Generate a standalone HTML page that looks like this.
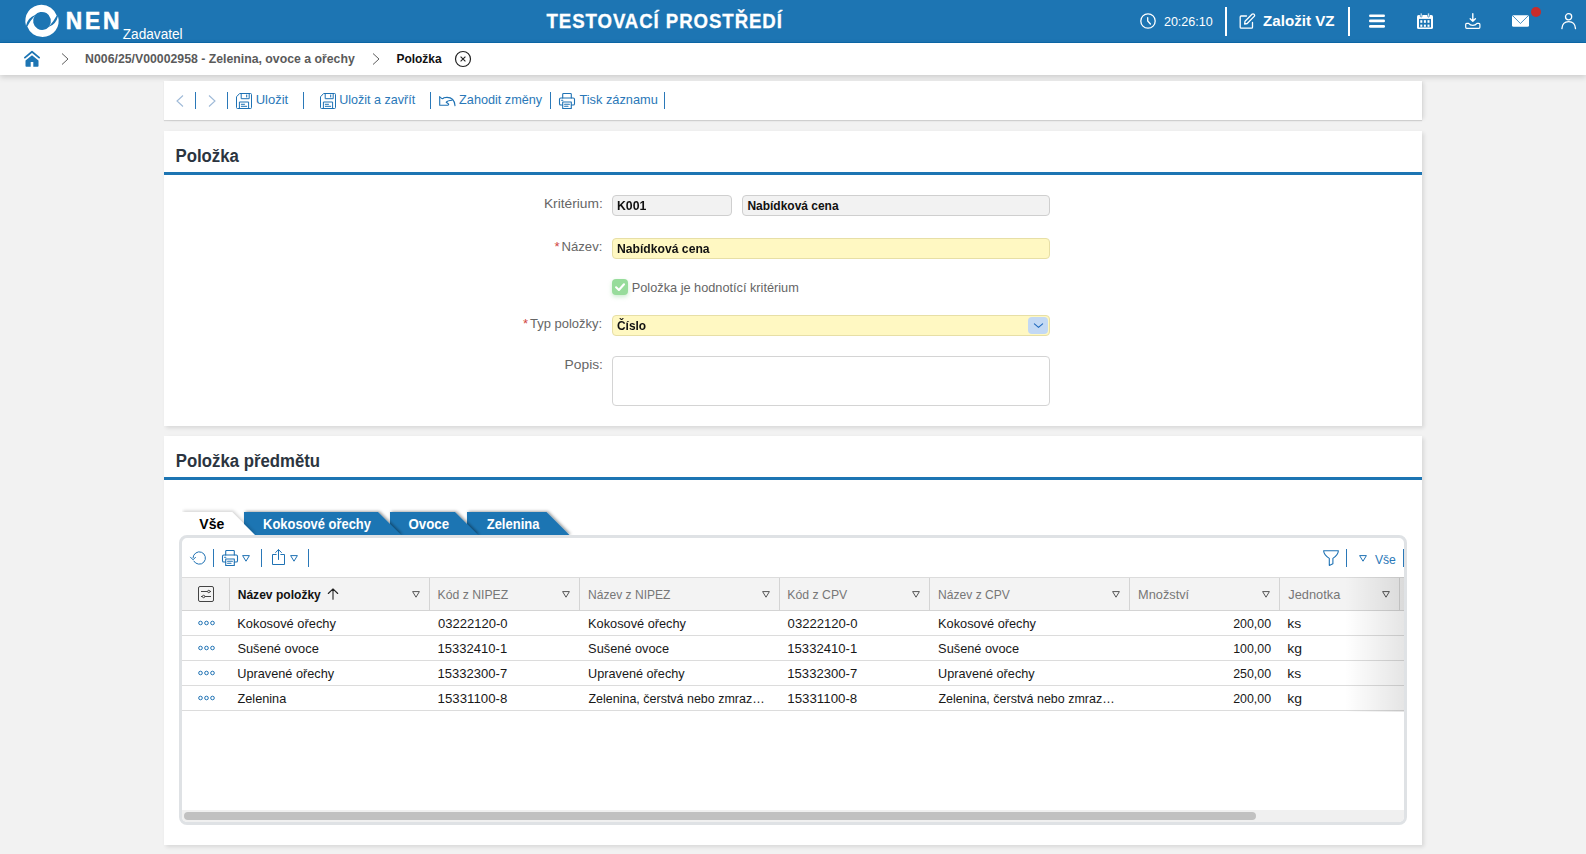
<!DOCTYPE html>
<html lang="cs">
<head>
<meta charset="utf-8">
<title>NEN - Položka</title>
<style>
*{box-sizing:border-box;margin:0;padding:0}
html,body{width:1586px;height:854px;overflow:hidden}
body{background:#f2f2f2;font-family:"Liberation Sans",sans-serif;font-size:13px;color:#222;position:relative}
.abs{position:absolute}
svg{display:block;overflow:visible}
/* header */
#hdr{position:absolute;left:0;top:0;width:1586px;height:43px;background:#1d75b3;border-bottom:1px solid #0c69aa;color:#fff}
#hdr .t{position:absolute;white-space:nowrap;color:#fff}
#hdr .vsep{position:absolute;top:7px;width:2px;height:29px;background:#fff}
/* breadcrumb */
#bc{position:absolute;left:0;top:43px;width:1586px;height:32px;background:#fff;box-shadow:0 2px 6px rgba(0,0,0,.17)}
#bc .t{position:absolute;white-space:nowrap;font-weight:bold;font-size:13px;line-height:16px;top:8px}
/* panels */
.panel{position:absolute;left:164px;width:1258px;background:#fff;box-shadow:2px 2px 4px rgba(0,0,0,.11)}
.ptitle{position:absolute;left:12px;white-space:nowrap;font-weight:bold;font-size:18px;line-height:22px;color:#2b3440}
.pline{position:absolute;left:0;width:1258px;height:3px;background:#1d75b3}
/* toolbar */
.tb{position:absolute;white-space:nowrap;color:#2a78b8;font-size:13px;line-height:16px}
.sep{position:absolute;width:1px;background:#2a78b8}
/* form */
.lbl{position:absolute;white-space:nowrap;color:#666;font-size:13px;line-height:16px;text-align:right}
.lbl b{color:#d0453f;font-weight:normal;margin-right:2px}
.inp{position:absolute;height:21px;border:1px solid #cfcfcf;border-radius:4px;background:#f2f2f2;font-weight:bold;font-size:13px;line-height:19px;padding-left:4px;color:#111;white-space:nowrap}
.inp span{display:inline-block}
.inp.req{background:#fff8c2;border-color:#e7dfa6}
/* grid */
#grid{position:absolute;left:15px;top:99px;width:1228px;height:290px;border:3px solid #dfe2e5;border-radius:8px;background:#fff;overflow:hidden}
.gh{position:absolute;top:39px;height:34px;border-top:1px solid #dcdcdc;border-bottom:1px solid #d4d4d4;background:#f3f3f3;left:0;width:1221px}
.gh .c{position:absolute;top:0;height:32px;border-right:1px solid #d4d4d4;color:#777;font-size:13px;line-height:16px;white-space:nowrap}
.gh .c span{position:absolute;left:8px;top:8px}
.gh .c svg{position:absolute;right:9px;top:13px}
.row{position:absolute;left:0;width:1221px;height:25px;border-bottom:1px solid #dcdcdc;font-size:13px;color:#181818}
.row span{position:absolute;top:4px;line-height:16px;white-space:nowrap}
.row .num{text-align:right}
.gh::before{content:"";position:absolute;left:-1px;top:-1px;width:1px;height:32px;background:#f3f3f3;border-top:1px solid #dcdcdc;border-bottom:1px solid #d4d4d4}
.row::before{content:"";position:absolute;left:-1px;bottom:-1px;width:1px;height:1px;background:#dcdcdc}
.tab{position:absolute;top:0;height:23px;color:#fff;font-weight:bold;font-size:15px;line-height:18px;white-space:nowrap}
/*FIT*/
#nen{transform-origin:left top;transform:translate(-0.30px,0px) scaleX(0.9647)}
#zad{transform-origin:left top;transform:translate(-0.20px,0px) scaleX(0.9733)}
#ttl{transform-origin:left top;transform:translate(-0.50px,0px) scaleX(0.9311)}
#clk{transform-origin:left top;transform:translate(-0.10px,1px) scaleX(0.9658)}
#zvz{transform-origin:left top;transform:translate(0.10px,1px) scaleX(1.0087)}
#bc1{transform-origin:left top;transform:translate(0.10px,0px) scaleX(0.9448)}
#bc2{transform-origin:left top;transform:translate(0.40px,0px) scaleX(0.9199)}
#pt1{transform-origin:left top;transform:translate(-0.50px,0px) scaleX(0.9315)}
#pt2{transform-origin:left top;transform:translate(-0.30px,0px) scaleX(0.9315)}
#t1{transform-origin:left top;transform:translate(-0.30px,1px) scaleX(1.0010)}
#t2{transform-origin:left top;transform:translate(-0.80px,1px) scaleX(0.9641)}
#t3{transform-origin:left top;transform:translate(0.10px,1px) scaleX(0.9745)}
#t4{transform-origin:left top;transform:translate(0.40px,1px) scaleX(0.9836)}
#l1{transform-origin:right top;transform:translate(1.20px,1px) scaleX(1.0588)}
#l2{transform-origin:right top;transform:translate(0.80px,1px) scaleX(1.0075)}
#l3{transform-origin:left top;transform:translate(-0.20px,1px) scaleX(0.9794)}
#l4{transform-origin:right top;transform:translate(-0.20px,1px) scaleX(0.9990)}
#l5{transform-origin:right top;transform:translate(0.80px,1px) scaleX(1.0602)}
#i1t{transform-origin:left top;transform:translate(0.00px,0px) scaleX(0.9416)}
#i2t{transform-origin:left top;transform:translate(0.40px,0px) scaleX(0.9212)}
#i3t{transform-origin:left top;transform:translate(0.00px,0px) scaleX(0.9353)}
#i4t{transform-origin:left top;transform:translate(0.00px,0px) scaleX(0.9161)}
#tb1{transform-origin:left top;transform:translate(0.30px,0px) scaleX(0.9358)}
#tb2{transform-origin:left top;transform:translate(0.10px,0px) scaleX(0.8622)}
#tb3{transform-origin:left top;transform:translate(0.50px,0px) scaleX(0.8849)}
#tb4{transform-origin:left top;transform:translate(0.70px,0px) scaleX(0.8663)}
#gv{transform-origin:left top;transform:translate(-0.10px,1px) scaleX(0.9363)}
#h1{transform-origin:left top;transform:translate(-0.30px,1px) scaleX(0.9279)}
#h2{transform-origin:left top;transform:translate(-0.40px,1px) scaleX(0.9394)}
#h3{transform-origin:left top;transform:translate(0.10px,1px) scaleX(0.9263)}
#h4{transform-origin:left top;transform:translate(-0.70px,1px) scaleX(0.9430)}
#h5{transform-origin:left top;transform:translate(0.10px,1px) scaleX(0.9287)}
#h6{transform-origin:left top;transform:translate(0.10px,1px) scaleX(0.9811)}
#h7{transform-origin:left top;transform:translate(0.30px,1px) scaleX(0.9852)}
#r0c0{transform-origin:left top;transform:translate(-0.80px,1px) scaleX(0.9901)}
#r1c0{transform-origin:left top;transform:translate(-0.60px,1px) scaleX(0.9883)}
#r2c0{transform-origin:left top;transform:translate(-0.80px,1px) scaleX(0.9789)}
#r3c0{transform-origin:left top;transform:translate(-0.50px,1px) scaleX(0.9776)}
#r0c1{transform-origin:left top;transform:translate(-0.10px,1px) scaleX(1.0031)}
#r1c1{transform-origin:left top;transform:translate(-0.40px,1px) scaleX(1.0031)}
#r2c1{transform-origin:left top;transform:translate(-0.40px,1px) scaleX(1.0031)}
#r3c1{transform-origin:left top;transform:translate(-0.40px,1px) scaleX(1.0178)}
#r0c2{transform-origin:left top;transform:translate(0.10px,1px) scaleX(0.9811)}
#r1c2{transform-origin:left top;transform:translate(0.10px,1px) scaleX(0.9833)}
#r2c2{transform-origin:left top;transform:translate(0.10px,1px) scaleX(0.9748)}
#r3c2{transform-origin:left top;transform:translate(0.50px,1px) scaleX(0.9599)}
#r0c3{transform-origin:left top;transform:translate(-0.40px,1px) scaleX(1.0074)}
#r1c3{transform-origin:left top;transform:translate(-0.70px,1px) scaleX(1.0074)}
#r2c3{transform-origin:left top;transform:translate(-0.70px,1px) scaleX(1.0074)}
#r3c3{transform-origin:left top;transform:translate(-0.70px,1px) scaleX(1.0220)}
#r0c4{transform-origin:left top;transform:translate(0.10px,1px) scaleX(0.9811)}
#r1c4{transform-origin:left top;transform:translate(0.10px,1px) scaleX(0.9833)}
#r2c4{transform-origin:left top;transform:translate(0.10px,1px) scaleX(0.9748)}
#r3c4{transform-origin:left top;transform:translate(0.50px,1px) scaleX(0.9599)}
#r0c5{transform-origin:right top;transform:translate(0.30px,1px) scaleX(0.9536)}
#r1c5{transform-origin:right top;transform:translate(0.30px,1px) scaleX(0.9518)}
#r2c5{transform-origin:right top;transform:translate(0.30px,1px) scaleX(0.9536)}
#r3c5{transform-origin:right top;transform:translate(0.30px,1px) scaleX(0.9536)}
#r0c6{transform-origin:left top;transform:translate(-0.70px,1px) scaleX(1.0733)}
#r1c6{transform-origin:left top;transform:translate(-0.70px,1px) scaleX(1.0733)}
#r2c6{transform-origin:left top;transform:translate(-0.70px,1px) scaleX(1.0733)}
#r3c6{transform-origin:left top;transform:translate(-0.70px,1px) scaleX(1.0733)}
/*ENDFIT*/
</style>
</head>
<body>

<!-- ================= HEADER ================= -->
<div id="hdr">
  <svg class="abs" style="left:25px;top:4px" width="34" height="34" viewBox="25 4 34 34" fill="#fff">
    <path d="M26.01 25.74A16.2 16.2 0 0 1 41.50 4.80A16.2 16.2 0 0 1 56.72 15.46Q53.4 21.8 49.18 26.19A9 9 0 0 0 46.40 13.11A9 9 0 0 0 35.01 15.11Q27.9 17.75 26.01 25.74Z"/>
    <path transform="rotate(180 42 20.950)" d="M26.01 25.74A16.2 16.2 0 0 1 41.50 4.80A16.2 16.2 0 0 1 56.72 15.46Q53.4 21.8 49.18 26.19A9 9 0 0 0 46.40 13.11A9 9 0 0 0 35.01 15.11Q27.9 17.75 26.01 25.74Z"/>
  </svg>
  <div class="t" id="nen" style="left:66px;top:7px;font-size:23.500px;line-height:28px;font-weight:bold;letter-spacing:3px;-webkit-text-stroke:.6px #fff">NEN</div>
  <div class="t" id="zad" style="left:123px;top:26px;font-size:14px;line-height:16px">Zadavatel</div>
  <div class="t" id="ttl" style="left:547px;top:9px;font-size:20px;line-height:24px;font-weight:bold;letter-spacing:1px;-webkit-text-stroke:.3px #fff">TESTOVACÍ PROSTŘEDÍ</div>

  <svg class="abs" style="left:1139.500px;top:13px" width="16" height="16" viewBox="0 0 16 16" fill="none" stroke="#fff" stroke-width="1.300" stroke-linecap="round"><circle cx="8" cy="8" r="7.200"/><path d="M7.700 4.600V8l2.700 3"/></svg>
  <div class="t" id="clk" style="left:1164px;top:13px;font-size:13px;line-height:16px">20:26:10</div>
  <div class="vsep" style="left:1225px"></div>
  <svg class="abs" style="left:1239px;top:13px" width="17" height="16" viewBox="0 0 17 16" fill="none" stroke="#fff" stroke-width="1.3" stroke-linejoin="round" stroke-linecap="round"><path d="M7.5 3H2.2a1 1 0 0 0-1 1v10.2a1 1 0 0 0 1 1h10.3a1 1 0 0 0 1-1V9.5"/><path d="M6 8.3 13 1.2a1.4 1.4 0 0 1 2 0l.2.2a1.4 1.4 0 0 1 0 2L8.2 10.5 5.6 11z"/></svg>
  <div class="t" id="zvz" style="left:1263px;top:11px;font-size:15px;line-height:18px;font-weight:bold">Založit VZ</div>
  <div class="vsep" style="left:1348px"></div>

  <svg class="abs" style="left:1369px;top:13px" width="16" height="16" viewBox="0 0 16 16" fill="#fff"><rect x="0" y="1.400" width="16" height="2.700" rx="1.300"/><rect x="0" y="6.600" width="16" height="2.700" rx="1.300"/><rect x="0" y="12" width="16" height="2.700" rx="1.300"/></svg>
  <svg class="abs" style="left:1417px;top:13px" width="16" height="16" viewBox="0 0 16 16"><rect x="0" y="2" width="16" height="14" rx="1.600" fill="#fff"/><rect x="3.300" y="0" width="1.700" height="4" rx=".8" fill="#fff" stroke="#1d75b3" stroke-width=".7"/><rect x="10.700" y="0" width="1.700" height="4" rx=".8" fill="#fff" stroke="#1d75b3" stroke-width=".7"/><rect x="2" y="5.900" width="12" height="8.500" fill="#1d75b3"/><g fill="#fff"><rect x="3.300" y="7.200" width="2" height="2.600"/><rect x="6.900" y="7.200" width="2" height="2.600"/><rect x="10.500" y="7.200" width="2" height="2.600"/><rect x="3.300" y="11.600" width="2" height="2.200"/><rect x="6.900" y="11.600" width="2" height="2.200"/><rect x="10.500" y="11.600" width="2" height="2.200"/></g></svg>
  <svg class="abs" style="left:1465px;top:13px" width="16" height="16" viewBox="0 0 16 16" fill="none" stroke="#fff" stroke-width="1.400" stroke-linecap="round" stroke-linejoin="round"><path d="M7.800.8v7.400M5.200 5.700 7.800 8.300l2.600-2.600"/><path d="M.7 11.400v2.900a1 1 0 0 0 1 1h12.200a1 1 0 0 0 1-1V11.400a1 1 0 0 0-1-1H12c-1 1.300-2.400 2-4.200 2s-3.200-.7-4.200-2H1.700a1 1 0 0 0-1 1z" stroke-width="1.200"/></svg>
  <svg class="abs" style="left:1512px;top:15px" width="17" height="12" viewBox="0 0 17 12"><rect x="0" y=".2" width="17" height="11.500" rx="1.500" fill="#fff"/><path d="M.8.800 8.400 8.500 16.200.800" fill="none" stroke="#1d75b3" stroke-width=".8"/></svg>
  <div class="abs" style="left:1531px;top:7px;width:10px;height:10px;border-radius:50%;background:#c82c2b"></div>
  <svg class="abs" style="left:1561px;top:13px" width="16" height="16" viewBox="0 0 16 16" fill="none" stroke="#fff" stroke-width="1.300" stroke-linecap="round"><circle cx="7.600" cy="3.800" r="3.100"/><path d="M.9 15.600C1.200 11.200 4 8.600 7.700 8.600s6.500 2.600 6.800 7"/></svg>
</div>

<!-- ================= BREADCRUMB ================= -->
<div id="bc">
  <svg class="abs" style="left:24px;top:8px" width="16" height="16" viewBox="0 0 16 16"><path d="M.9 6.600 8 .8l7.100 5.800" fill="none" stroke="#1d75b3" stroke-width="1.800" stroke-linecap="round" stroke-linejoin="round"/><path d="M8 4.200 1.500 9.600V15a.8.800 0 0 0 .8.800h4.400v-4.800h2.600v4.800h4.400a.8.800 0 0 0 .8-.8V9.600z" fill="#1d75b3"/></svg>
  <svg class="abs" style="left:61px;top:10px" width="8" height="12" viewBox="0 0 8 12" fill="none" stroke="#5e5e5e" stroke-width="1"><path d="M1 .5 7 6 1 11.500"/></svg>
  <div class="t" id="bc1" style="left:85px;color:#5a5a5a">N006/25/V00002958 - Zelenina, ovoce a ořechy</div>
  <svg class="abs" style="left:372px;top:10px" width="8" height="12" viewBox="0 0 8 12" fill="none" stroke="#5e5e5e" stroke-width="1"><path d="M1 .5 7 6 1 11.500"/></svg>
  <div class="t" id="bc2" style="left:396px;color:#111">Položka</div>
  <svg class="abs" style="left:454px;top:7px" width="18" height="18" viewBox="0 0 18 18" fill="none" stroke="#222" stroke-width="1.200"><circle cx="9" cy="9" r="7.500"/><path d="M6.600 6.600l4.800 4.800M11.400 6.600l-4.800 4.800" stroke-width="1.100"/></svg>
</div>

<!-- ================= TOOLBAR ================= -->
<div class="panel" id="tbp" style="top:81px;height:39px;box-shadow:0 1px 1px rgba(0,0,0,.12),3px 0 4px -1px rgba(0,0,0,.1)">
  <svg class="abs" style="left:12px;top:14px" width="8" height="12" viewBox="0 0 8 12" fill="none" stroke="#9fbad8" stroke-width="1.1"><path d="M7 .5 1 6l6 5.500"/></svg>
  <div class="sep" style="left:31px;top:11px;height:17px"></div>
  <svg class="abs" style="left:44px;top:14px" width="8" height="12" viewBox="0 0 8 12" fill="none" stroke="#9fbad8" stroke-width="1.1"><path d="M1 .5 7 6l-6 5.500"/></svg>
  <div class="sep" style="left:63px;top:11px;height:17px"></div>
  <svg class="abs" style="left:72px;top:12px" width="16" height="16" viewBox="0 0 16 16" fill="none" stroke="#1f72b4" stroke-width="1" stroke-linejoin="round"><path d="M3.600.5H14.500a1 1 0 0 1 1 1V14.500a1 1 0 0 1-1 1H1.500a1 1 0 0 1-1-1V3.800z"/><path d="M5.200.5v5.200h8V.5"/><path d="M10.700 2v2" stroke-linecap="round"/><path d="M3.400 15.500V9h9.200v6.500"/><path d="M5.300 11.300h3.200M5.300 13.300h5.400" stroke-linecap="round"/></svg>
  <div class="tb" id="t1" style="left:92px;top:10px">Uložit</div>
  <div class="sep" style="left:139px;top:11px;height:17px"></div>
  <svg class="abs" style="left:156px;top:12px" width="16" height="16" viewBox="0 0 16 16" fill="none" stroke="#1f72b4" stroke-width="1" stroke-linejoin="round"><path d="M3.600.5H14.500a1 1 0 0 1 1 1V14.500a1 1 0 0 1-1 1H1.500a1 1 0 0 1-1-1V3.800z"/><path d="M5.200.5v5.200h8V.5"/><path d="M10.700 2v2" stroke-linecap="round"/><path d="M3.400 15.500V9h9.200v6.500"/><path d="M5.300 11.300h3.200M5.300 13.300h5.400" stroke-linecap="round"/></svg>
  <div class="tb" id="t2" style="left:176px;top:10px">Uložit a zavřít</div>
  <div class="sep" style="left:266px;top:11px;height:17px"></div>
  <svg class="abs" style="left:275px;top:14px" width="17" height="12" viewBox="0 0 17 12" fill="none" stroke="#1f72b4" stroke-width="1.100" stroke-linejoin="round" stroke-linecap="round"><path d="M.7 1.900V10.200H8.800Q10.300 9.500 9.300 8.700L7.200 7.300Q8.600 5.300 13 5.200"/><path d="M16 10.600C15.600 5.500 12.500 2.400 8 2.400 6.500 2.400 5.300 2.500 4.800 2.800 3.900 3.900 3 3.700 2.300 3.100L.7 1.900"/></svg>
  <div class="tb" id="t3" style="left:295px;top:10px">Zahodit změny</div>
  <div class="sep" style="left:386px;top:11px;height:17px"></div>
  <svg class="abs" style="left:395px;top:12px" width="16" height="16" viewBox="0 0 16 16" fill="none" stroke="#1f72b4" stroke-width="1.100" stroke-linejoin="round" stroke-linecap="round"><path d="M3.700 5V1.300a.8.800 0 0 1 .8-.8h7a.8.800 0 0 1 .8.800V5"/><path d="M3.600 12H1.800A1.300 1.300 0 0 1 .5 10.700V6.300A1.300 1.300 0 0 1 1.800 5H14.200a1.300 1.300 0 0 1 1.300 1.300v4.400A1.300 1.300 0 0 1 14.200 12H12.400"/><path d="M3.700 9h8.600v6.500H3.700z"/><path d="M5.600 11.300h4.800M5.600 13.300h3.400M2.600 7.200h1.200"/></svg>
  <div class="tb" id="t4" style="left:415px;top:10px">Tisk záznamu</div>
  <div class="sep" style="left:500px;top:11px;height:17px"></div>
</div>

<!-- ================= PANEL 1 ================= -->
<div class="panel" id="p1" style="top:131px;height:295px">
  <div class="ptitle" id="pt1" style="top:14px">Položka</div>
  <div class="pline" style="top:41px"></div>
  <div class="lbl" id="l1" style="right:820px;top:64px">Kritérium:</div>
  <div class="inp" id="i1" style="left:448px;top:64px;width:120px"><span id="i1t">K001</span></div>
  <div class="inp" id="i2" style="left:578px;top:64px;width:308px"><span id="i2t">Nabídková cena</span></div>
  <div class="lbl" id="l2" style="right:820px;top:107px"><b>*</b>Název:</div>
  <div class="inp req" id="i3" style="left:448px;top:107px;width:438px"><span id="i3t">Nabídková cena</span></div>
  <div class="abs" id="cb" style="left:448px;top:148px;width:16px;height:16px;border-radius:4px;background:#97dc9b;box-shadow:0 2px 4px rgba(110,200,120,.35)"><svg class="abs" style="left:3px;top:4px" width="10" height="8" viewBox="0 0 10 8" fill="none" stroke="#fff" stroke-width="2.100" stroke-linecap="round" stroke-linejoin="round"><path d="M1.100 4.300 3.900 7 9 1.300"/></svg></div>
  <div class="lbl" id="l3" style="left:468px;top:148px;text-align:left">Položka je hodnotící kritérium</div>
  <div class="lbl" id="l4" style="right:820px;top:184px"><b>*</b>Typ položky:</div>
  <div class="inp req" id="i4" style="left:448px;top:184px;width:438px"><span id="i4t">Číslo</span>
    <div class="abs" style="right:1px;top:1px;width:20px;height:17px;border-radius:4px;background:#c3d9f4"><svg class="abs" style="left:6px;top:6px" width="9" height="5" viewBox="0 0 9 5" fill="none" stroke="#1f69bd" stroke-width="1.100" stroke-linecap="round" stroke-linejoin="round"><path d="M.4.900 4.500 4.400 8.600.900"/></svg></div>
  </div>
  <div class="lbl" id="l5" style="right:820px;top:225px">Popis:</div>
  <div class="inp" id="i5" style="left:448px;top:225px;width:438px;height:50px;background:#fff;border-color:#d4d4d4"></div>
</div>

<!-- ================= PANEL 2 ================= -->
<div class="panel" id="p2" style="top:436px;height:409px">
  <div class="ptitle" id="pt2" style="top:14px">Položka předmětu</div>
  <div class="pline" style="top:41px"></div>
  <svg class="abs" style="left:0;top:70px" width="460" height="32" viewBox="164 506 460 32">
    <defs><filter id="ts" x="-10%" y="-40%" width="120%" height="180%"><feDropShadow dx="1.500" dy="-.5" stdDeviation="1.600" flood-color="#000" flood-opacity=".42"/></filter>
    <filter id="ts2" x="-10%" y="-40%" width="120%" height="180%"><feDropShadow dx="1.200" dy="-1.500" stdDeviation="1.500" flood-color="#000" flood-opacity=".16"/></filter></defs>
    <polygon points="467,512 546.500,512 569.500,535 467,535" fill="#1d75b3" filter="url(#ts)"/>
    <polygon points="390,512 455,512 478,535 390,535" fill="#1d75b3" filter="url(#ts)"/>
    <polygon points="244,512 378,512 401,535 244,535" fill="#1d75b3" filter="url(#ts)"/>
    <polygon points="182,512 232,512 255,535 182,535" fill="#fff" filter="url(#ts2)"/>
    <rect x="170" y="535" width="440" height="4" fill="#fff"/><rect x="170" y="506" width="12" height="30" fill="#fff"/>
  </svg>
  <div class="tab" id="tb1" style="left:35px;top:79px;color:#000">Vše</div>
  <div class="tab" id="tb2" style="left:99px;top:79px">Kokosové ořechy</div>
  <div class="tab" id="tb3" style="left:244px;top:79px">Ovoce</div>
  <div class="tab" id="tb4" style="left:322px;top:79px">Zelenina</div>
  <div id="grid"><div class="abs" style="left:1px;top:0;width:1221px;height:284px">
  <svg class="abs" style="left:7px;top:13px" width="16" height="15" viewBox="0 0 16 15" fill="none" stroke="#1f72b4" stroke-width="1" stroke-linecap="round" stroke-linejoin="round"><path d="M3.800 10.100A6.200 6.200 0 1 0 3 6.800"/><path d="M.5 6.200 3 8.800 5.500 6.300"/></svg>
  <div class="sep" style="left:30px;top:11px;height:18px"></div>
  <svg class="abs" style="left:39px;top:12px" width="16" height="16" viewBox="0 0 16 16" fill="none" stroke="#1f72b4" stroke-width="1.100" stroke-linejoin="round" stroke-linecap="round"><path d="M3.700 5V1.300a.8.800 0 0 1 .8-.8h7a.8.800 0 0 1 .8.800V5"/><path d="M3.600 12H1.800A1.300 1.300 0 0 1 .5 10.700V6.300A1.300 1.300 0 0 1 1.800 5H14.200a1.300 1.300 0 0 1 1.300 1.300v4.400A1.300 1.300 0 0 1 14.200 12H12.400"/><path d="M3.700 9h8.600v6.500H3.700z"/><path d="M5.600 11.300h4.800M5.600 13.300h3.400M2.600 7.200h1.200"/></svg>
  <svg class="abs" style="left:59px;top:17px" width="8" height="7" viewBox="0 0 8 7" fill="none" stroke="#1f72b4" stroke-width="1" stroke-linejoin="round"><path d="M.6.600h6.800L4 6.200z"/></svg>
  <div class="sep" style="left:78px;top:11px;height:18px"></div>
  <svg class="abs" style="left:89px;top:11px" width="13" height="16" viewBox="0 0 13 16" fill="none" stroke="#1f72b4" stroke-width="1" stroke-linejoin="round" stroke-linecap="round"><path d="M4.200 5.500H.5v10h12v-10H8.800"/><path d="M6.500 10.500V.8M3.600 3.500 6.500.600l2.900 2.900"/></svg>
  <svg class="abs" style="left:107px;top:17px" width="8" height="7" viewBox="0 0 8 7" fill="none" stroke="#1f72b4" stroke-width="1" stroke-linejoin="round"><path d="M.6.600h6.800L4 6.200z"/></svg>
  <div class="sep" style="left:125px;top:11px;height:18px"></div>

  <svg class="abs" style="left:1140px;top:12px" width="16" height="16" viewBox="0 0 16 16" fill="none" stroke="#1f72b4" stroke-width="1.100" stroke-linejoin="round"><path d="M.6.800h14.800c-.3 3.600-2.600 5.800-5.500 7.600v5.400L6.300 15.400V8.400C3.300 6.600.9 4.400.6.800z"/></svg>
  <div class="sep" style="left:1163px;top:11px;height:18px"></div>
  <svg class="abs" style="left:1176px;top:17px" width="8" height="7" viewBox="0 0 8 7" fill="none" stroke="#1f72b4" stroke-width="1" stroke-linejoin="round"><path d="M.6.600h6.800L4 6.200z"/></svg>
  <div class="tb" id="gv" style="left:1192px;top:13px">Vše</div>
  <div class="sep" style="left:1220px;top:11px;height:18px"></div>

  <div class="gh">
    <div class="c" style="left:0;width:47px"><svg style="left:15px;top:8px;right:auto" width="16" height="16" viewBox="0 0 16 16" fill="none" stroke="#444" stroke-width="1"><rect x=".5" y=".5" width="15" height="15" rx="1.500"/><path d="M3 5.500h6.600M12 5.500h1M3 10.500h1.400M6.800 10.500H13"/><circle cx="10.800" cy="5.500" r="1.200"/><circle cx="5.600" cy="10.500" r="1.200"/></svg></div>
    <div class="c" style="left:47px;width:200px;color:#111;font-weight:bold"><span id="h1">Název položky</span><svg style="left:97px;top:10px;right:auto" width="12" height="12" viewBox="0 0 12 12" fill="none" stroke="#222" stroke-width="1.100" stroke-linecap="round" stroke-linejoin="round"><path d="M6 11.300V.9M1.300 5.500 6 .8l4.700 4.700"/></svg><svg width="8" height="7" viewBox="0 0 8 7" fill="none" stroke="#555" stroke-width="1" stroke-linejoin="round"><path d="M.6.600h6.800L4 6.200z"/></svg></div>
    <div class="c" style="left:247px;width:150px"><span id="h2">Kód z NIPEZ</span><svg width="8" height="7" viewBox="0 0 8 7" fill="none" stroke="#555" stroke-width="1" stroke-linejoin="round"><path d="M.6.600h6.800L4 6.200z"/></svg></div>
    <div class="c" style="left:397px;width:200px"><span id="h3">Název z NIPEZ</span><svg width="8" height="7" viewBox="0 0 8 7" fill="none" stroke="#555" stroke-width="1" stroke-linejoin="round"><path d="M.6.600h6.800L4 6.200z"/></svg></div>
    <div class="c" style="left:597px;width:150px"><span id="h4">Kód z CPV</span><svg width="8" height="7" viewBox="0 0 8 7" fill="none" stroke="#555" stroke-width="1" stroke-linejoin="round"><path d="M.6.600h6.800L4 6.200z"/></svg></div>
    <div class="c" style="left:747px;width:200px"><span id="h5">Název z CPV</span><svg width="8" height="7" viewBox="0 0 8 7" fill="none" stroke="#555" stroke-width="1" stroke-linejoin="round"><path d="M.6.600h6.800L4 6.200z"/></svg></div>
    <div class="c" style="left:947px;width:150px"><span id="h6">Množství</span><svg width="8" height="7" viewBox="0 0 8 7" fill="none" stroke="#555" stroke-width="1" stroke-linejoin="round"><path d="M.6.600h6.800L4 6.200z"/></svg></div>
    <div class="c" style="left:1097px;width:120px"><span id="h7">Jednotka</span><svg width="8" height="7" viewBox="0 0 8 7" fill="none" stroke="#555" stroke-width="1" stroke-linejoin="round"><path d="M.6.600h6.800L4 6.200z"/></svg></div>
  </div>
  <div class="row" style="top:73px"><svg class="abs" style="left:15px;top:9px" width="17" height="6" viewBox="0 0 17 6" fill="none" stroke="#1f72b4" stroke-width="1"><circle cx="2.500" cy="3" r="1.800"/><circle cx="8.500" cy="3" r="1.800"/><circle cx="14.500" cy="3" r="1.800"/></svg><span id="r0c0" style="left:55px">Kokosové ořechy</span><span id="r0c1" style="left:255px">03222120-0</span><span id="r0c2" style="left:405px">Kokosové ořechy</span><span id="r0c3" style="left:605px">03222120-0</span><span id="r0c4" style="left:755px">Kokosové ořechy</span><span class="num" id="r0c5" style="right:133px">200,00</span><span id="r0c6" style="left:1105px">ks</span></div>
  <div class="row" style="top:98px"><svg class="abs" style="left:15px;top:9px" width="17" height="6" viewBox="0 0 17 6" fill="none" stroke="#1f72b4" stroke-width="1"><circle cx="2.500" cy="3" r="1.800"/><circle cx="8.500" cy="3" r="1.800"/><circle cx="14.500" cy="3" r="1.800"/></svg><span id="r1c0" style="left:55px">Sušené ovoce</span><span id="r1c1" style="left:255px">15332410-1</span><span id="r1c2" style="left:405px">Sušené ovoce</span><span id="r1c3" style="left:605px">15332410-1</span><span id="r1c4" style="left:755px">Sušené ovoce</span><span class="num" id="r1c5" style="right:133px">100,00</span><span id="r1c6" style="left:1105px">kg</span></div>
  <div class="row" style="top:123px"><svg class="abs" style="left:15px;top:9px" width="17" height="6" viewBox="0 0 17 6" fill="none" stroke="#1f72b4" stroke-width="1"><circle cx="2.500" cy="3" r="1.800"/><circle cx="8.500" cy="3" r="1.800"/><circle cx="14.500" cy="3" r="1.800"/></svg><span id="r2c0" style="left:55px">Upravené ořechy</span><span id="r2c1" style="left:255px">15332300-7</span><span id="r2c2" style="left:405px">Upravené ořechy</span><span id="r2c3" style="left:605px">15332300-7</span><span id="r2c4" style="left:755px">Upravené ořechy</span><span class="num" id="r2c5" style="right:133px">250,00</span><span id="r2c6" style="left:1105px">ks</span></div>
  <div class="row" style="top:148px"><svg class="abs" style="left:15px;top:9px" width="17" height="6" viewBox="0 0 17 6" fill="none" stroke="#1f72b4" stroke-width="1"><circle cx="2.500" cy="3" r="1.800"/><circle cx="8.500" cy="3" r="1.800"/><circle cx="14.500" cy="3" r="1.800"/></svg><span id="r3c0" style="left:55px">Zelenina</span><span id="r3c1" style="left:255px">15331100-8</span><span id="r3c2" style="left:405px">Zelenina, čerstvá nebo zmraz…</span><span id="r3c3" style="left:605px">15331100-8</span><span id="r3c4" style="left:755px">Zelenina, čerstvá nebo zmraz…</span><span class="num" id="r3c5" style="right:133px">200,00</span><span id="r3c6" style="left:1105px">kg</span></div>
  <div class="abs" style="left:1162px;top:39px;width:59px;height:135px;background:linear-gradient(90deg,rgba(0,0,0,0),rgba(0,0,0,.1))"></div>
  <div class="abs" style="left:-1px;top:272px;width:1222px;height:12px;background:#f0f0f0"><div class="abs" style="left:2px;top:2px;width:1072px;height:8px;border-radius:4px;background:#c1c1c1"></div></div>
  </div></div>
</div>

</body>
</html>
